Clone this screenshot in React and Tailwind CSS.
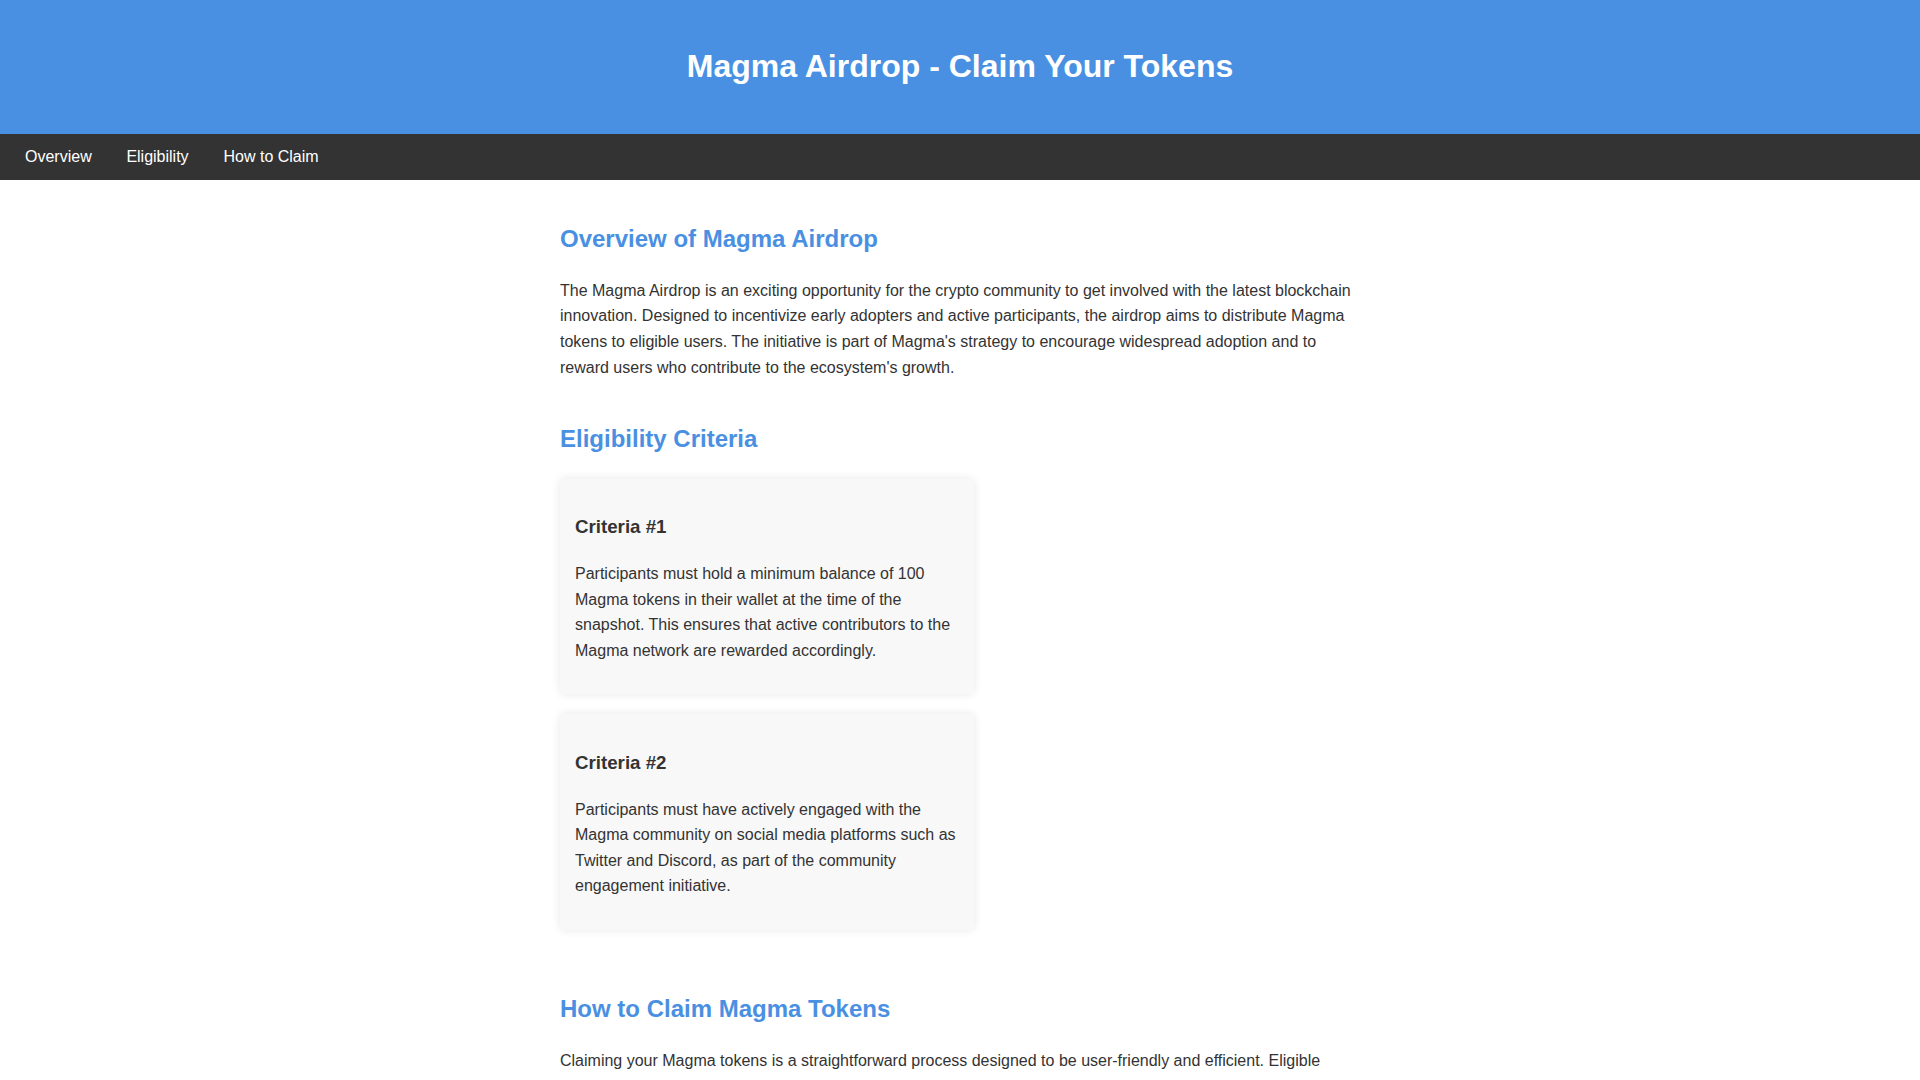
export default function App() {
  return (
    <div className="min-h-screen bg-white text-[#333] text-[16px] leading-[1.6] font-['Liberation_Sans',Arial,sans-serif]">
      <header className="bg-[#4a90e2] text-white text-center py-5">
        <h1 className="text-[32px] font-bold leading-[1.6] my-[21.44px]">Magma Airdrop - Claim Your Tokens</h1>
      </header>
      <nav className="bg-[#333] p-[10px] flex">
        <a href="#overview" className="text-white mx-[15px]">Overview</a>
        <a href="#eligibility" className="text-white ml-[19.7px] mr-[15px]">Eligibility</a>
        <a href="#claim" className="text-white ml-[19.9px] mr-[15px]">How to Claim</a>
      </nav>
      <main className="max-w-[800px] mx-auto pt-5">
        <section id="overview" className="mb-[40px]">
          <h2 className="text-[24px] font-bold leading-[1.6] text-[#4a90e2] my-[19.92px]">Overview of Magma Airdrop</h2>
          <p className="my-4">
            The Magma Airdrop is an exciting opportunity for the crypto community to get involved with the latest blockchain innovation. Designed to incentivize early adopters and active participants, the airdrop aims to distribute Magma tokens to eligible users. The initiative is part of Magma's strategy to encourage widespread adoption and to reward users who contribute to the ecosystem's growth.
          </p>
        </section>
        <section id="eligibility" className="mb-[40px]">
          <h2 className="text-[24px] font-bold leading-[1.6] text-[#4a90e2] my-[19.92px]">Eligibility Criteria</h2>
          <div className="flex flex-wrap justify-between">
            <div className="box-content w-[48%] p-[15px] mb-5 bg-[#f8f8f8] rounded-[5px] shadow-[0_0_10px_rgba(0,0,0,0.1)]">
              <h3 className="text-[18.72px] font-bold leading-[1.6] my-[18.72px]">Criteria #1</h3>
              <p className="my-4">Participants must hold a minimum balance of 100 Magma tokens in their wallet at the time of the snapshot. This ensures that active contributors to the Magma network are rewarded accordingly.</p>
            </div>
            <div className="box-content w-[48%] p-[15px] mb-5 bg-[#f8f8f8] rounded-[5px] shadow-[0_0_10px_rgba(0,0,0,0.1)]">
              <h3 className="text-[18.72px] font-bold leading-[1.6] my-[18.72px]">Criteria #2</h3>
              <p className="my-4">Participants must have actively engaged with the Magma community on social media platforms such as Twitter and Discord, as part of the community engagement initiative.</p>
            </div>
          </div>
        </section>
        <section id="claim" className="mb-[40px]">
          <h2 className="text-[24px] font-bold leading-[1.6] text-[#4a90e2] my-[19.92px]">How to Claim Magma Tokens</h2>
          <p className="my-4">
            Claiming your Magma tokens is a straightforward process designed to be user-friendly and efficient. Eligible participants can connect their wallet to the official Magma claim portal, verify their eligibility, and receive their tokens directly after confirming the transaction.
          </p>
        </section>
      </main>
    </div>
  );
}
